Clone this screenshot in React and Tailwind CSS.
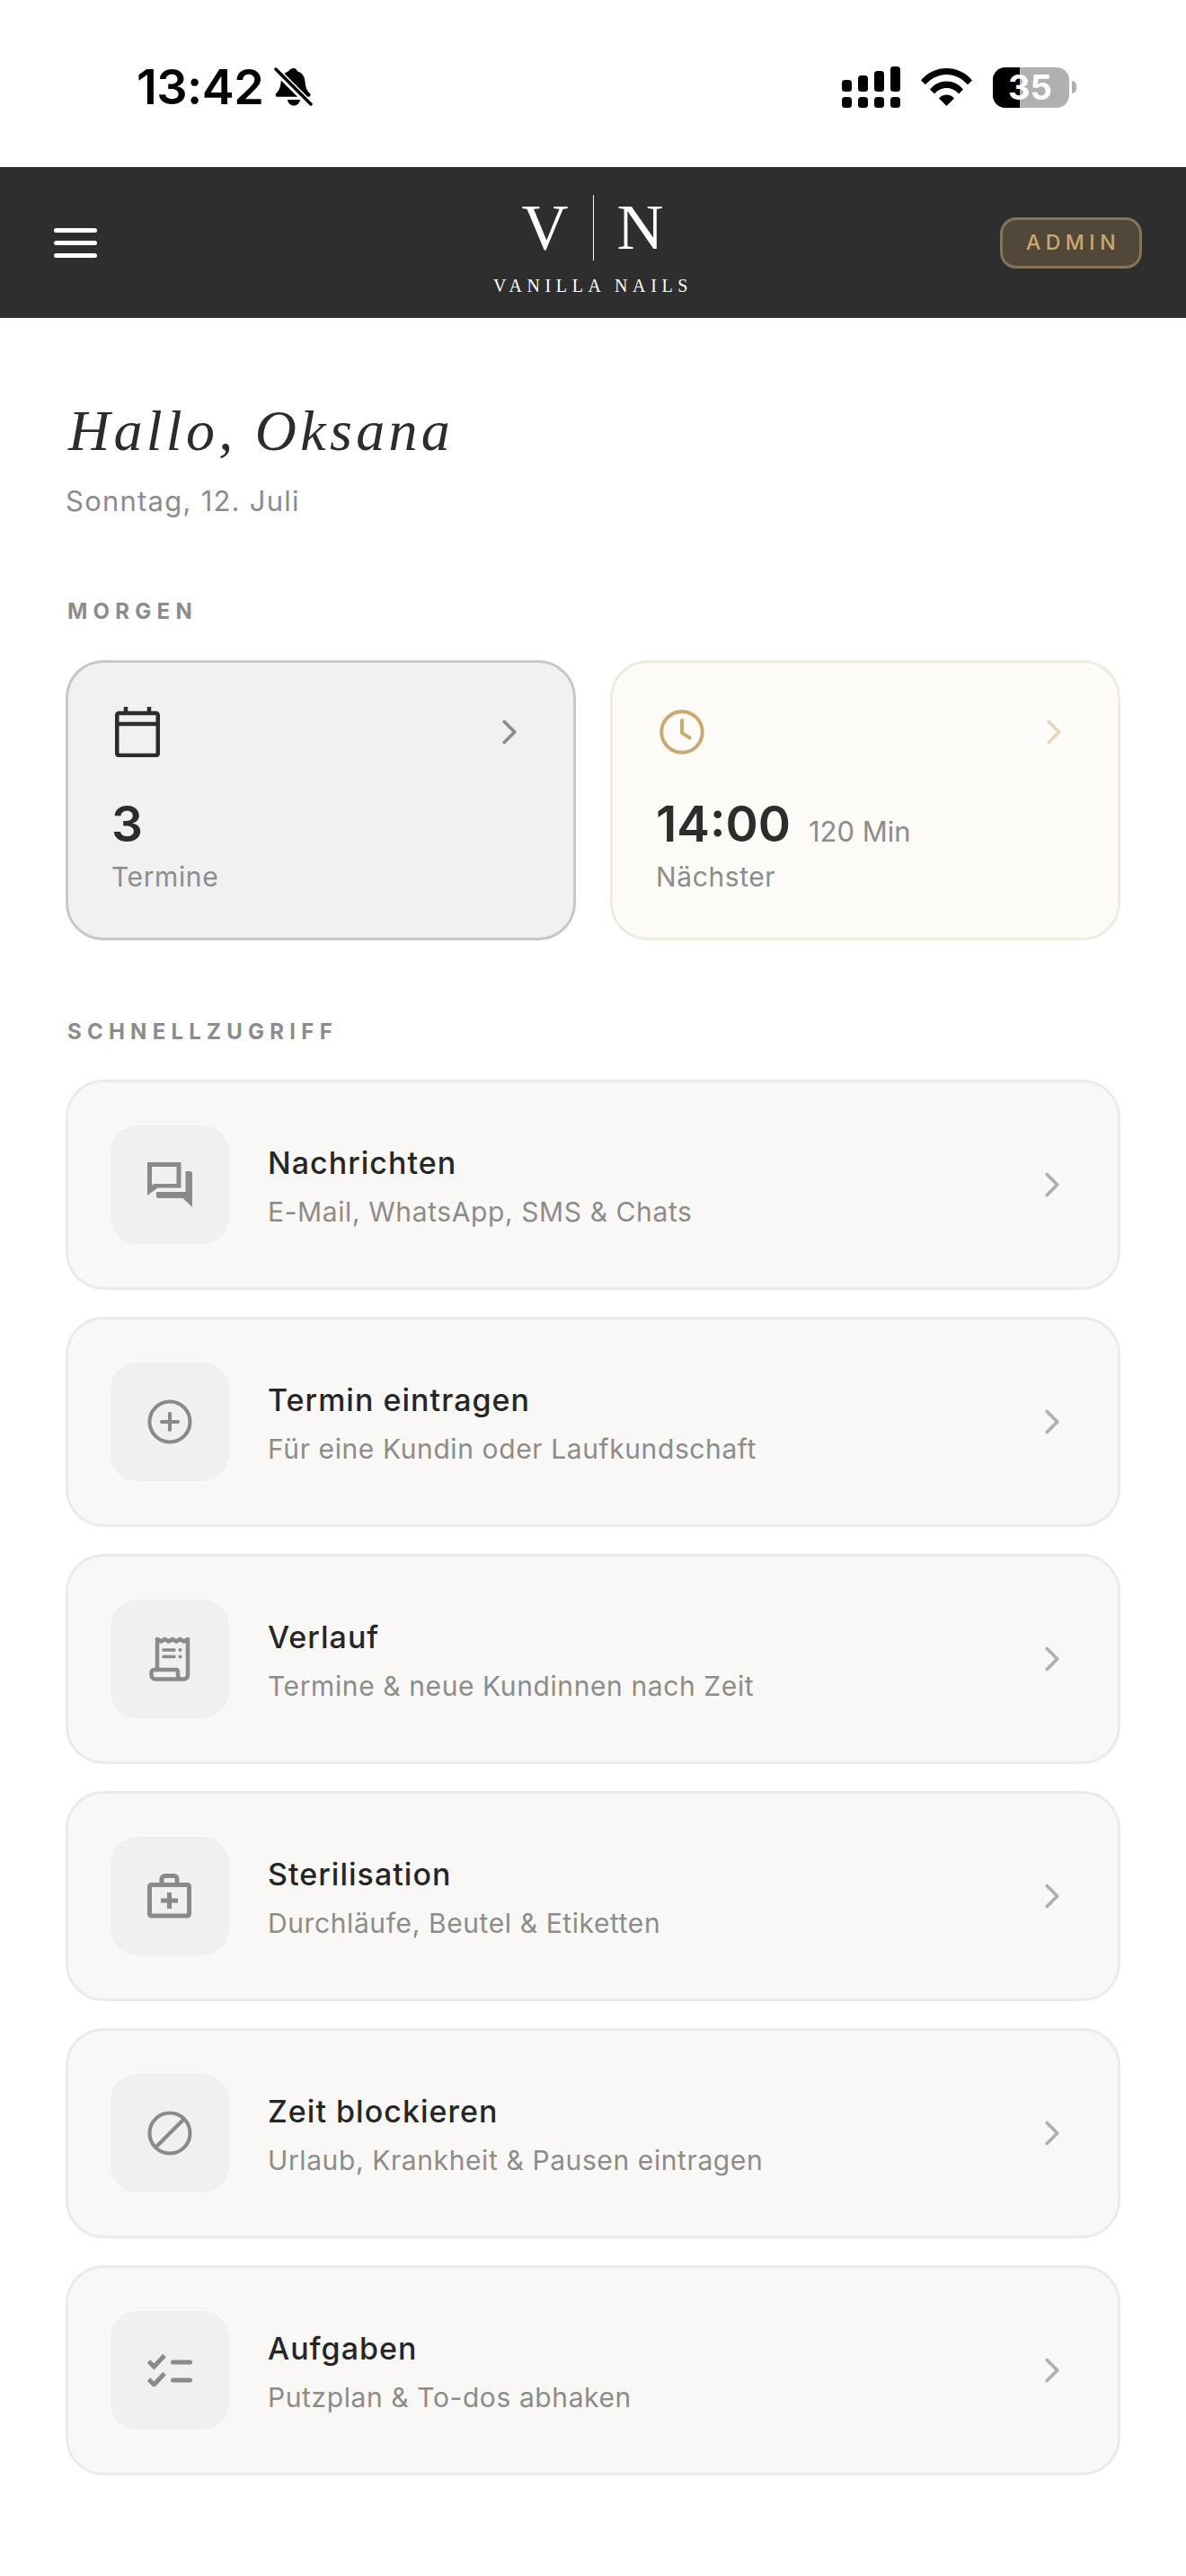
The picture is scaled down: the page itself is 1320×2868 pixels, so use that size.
import { ChevronRight } from 'lucide-react';

function Bell() {
  return (
    <svg width="44" height="46" viewBox="0 0 44 46" className="ml-[12px]">
      <path d="M22 2c2.200 0 3.500 1.500 3.800 3.300 5.500 1.500 8.200 6 8.700 11.500.5 5.500 1.500 9.500 5.200 13 1.500 1.500 1 4-1.500 4H4c-2.500 0-3-2.500-1.500-4 3.700-3.500 4.700-7.500 5.200-13 .5-5.500 3.200-10 8.700-11.500C16.700 3.500 19.800 2 22 2z" fill="#000" />
      <path d="M15 37h14c-.5 4-3.500 6.500-7 6.500S15.500 41 15 37z" fill="#000" />
      <path d="M1 3l38 38" stroke="#fff" strokeWidth="8" />
      <path d="M2 3l39 39" stroke="#000" strokeWidth="3.500" strokeLinecap="round" />
    </svg>
  );
}

function Signal() {
  return (
    <svg width="65" height="46" viewBox="0 0 65 46">
      <rect x="0" y="34" width="11" height="12" rx="3.500" />
      <rect x="18" y="34" width="11" height="12" rx="3.500" />
      <rect x="36" y="34" width="11" height="12" rx="3.500" />
      <rect x="54" y="34" width="11" height="12" rx="3.500" />
      <rect x="0" y="15" width="11" height="13" rx="3.500" />
      <rect x="18" y="10" width="11" height="18" rx="3.500" />
      <rect x="36" y="5" width="11" height="23" rx="3.500" />
      <rect x="54" y="0" width="11" height="28" rx="3.500" />
    </svg>
  );
}

function Wifi() {
  return (
    <svg width="57" height="42" viewBox="0 0 57 42">
      <path d="M0 13.500C7.500 4.500 17.500 0 28.500 0S49.500 4.500 57 13.500l-5 4.800C45.500 11 37.500 7 28.500 7S11.500 11 5 18.300z" />
      <path d="M10 23.500C15 17.500 21.500 14.500 28.500 14.500S42 17.500 47 23.500l-5 5C38.500 24.500 34 22 28.500 22S18.500 24.500 15 28.500z" />
      <path d="M20 33.500c2.200-2.500 5.200-4 8.500-4s6.300 1.500 8.500 4L28.500 42z" />
    </svg>
  );
}

function Battery() {
  return (
    <div className="flex items-center gap-[3px]">
      <div className="relative flex h-[45px] w-[85px] overflow-hidden rounded-[14px] bg-[#b0b0b0]">
        <div className="h-full w-[30px] bg-black" />
        <span className="absolute left-[17px] top-0 text-[38px] leading-[45px] font-bold text-white">35</span>
      </div>
      <div className="h-[14px] w-[5px] rounded-r-full bg-[#b0b0b0]" />
    </div>
  );
}

function IconChat() {
  return (
    <svg width="50" height="50" viewBox="0 0 50 50" fill="#8a8a88">
      <path fillRule="evenodd" d="M0 0h37.500v28.500H11.500L0 37zM5 5v20.500l3-1.500h24.500V5z" />
      <path d="M42.500 10h5a2.500 2.500 0 0 1 2.500 2.500V50L39.500 40H12a2 2 0 0 1-2-2v-5h32.500z" />
    </svg>
  );
}

function IconPlus() {
  return (
    <svg width="54" height="54" viewBox="0 0 24 24" fill="none" stroke="#8a8a88" strokeWidth="1.800" strokeLinecap="round">
      <circle cx="12" cy="12" r="10" />
      <path d="M12 8v8M8 12h8" />
    </svg>
  );
}

function IconReceipt() {
  return (
    <svg width="46" height="50" viewBox="0 0 46 50" fill="none" stroke="#8a8a88">
      <path
        strokeWidth="4.500"
        strokeLinejoin="round"
        d="M9 36V3l4.250 2.500 4.250-2.500 4.250 2.500 4.250-2.500 4.250 2.500 4.250-2.500 4.250 2.500L43 3V43a4.500 4.500 0 0 1-4.500 4.500H7A4.500 4.500 0 0 1 2.500 43V40a3 3 0 0 1 3-3H30a2 2 0 0 1 2 2v4a4.500 4.500 0 0 0 4.500 4.500"
      />
      <path strokeWidth="3.500" strokeLinecap="round" d="M16 15h12M16 22.500h12" />
      <circle cx="34.500" cy="15" r="2" fill="#8a8a88" stroke="none" />
      <circle cx="34.500" cy="22.500" r="2" fill="#8a8a88" stroke="none" />
    </svg>
  );
}

function IconKit() {
  return (
    <svg width="50" height="50" viewBox="0 0 50 50" fill="none" stroke="#8a8a88" strokeWidth="5" strokeLinejoin="round">
      <rect x="2.500" y="12.500" width="44" height="34.500" rx="2" />
      <path d="M16 12V6a3.500 3.500 0 0 1 3.500-3.500h10A3.500 3.500 0 0 1 33 6v6" />
      <path d="M24.500 21v18M15 30h19" />
    </svg>
  );
}

function IconBlock() {
  return (
    <svg width="54" height="54" viewBox="0 0 24 24" fill="none" stroke="#8a8a88" strokeWidth="1.800">
      <circle cx="12" cy="12" r="10" />
      <path d="M5 19L19 5" />
    </svg>
  );
}

function IconTasks() {
  return (
    <svg width="50" height="36" viewBox="0 0 50 36" fill="none" stroke="#8a8a88" strokeWidth="5">
      <path d="M1.500 8l6 6L19 1.500M1.500 28l6 6L19 21.500" />
      <path d="M28.500 9h19M28.500 29h19" strokeLinecap="round" />
    </svg>
  );
}

const links = [
  { title: 'Nachrichten', sub: 'E-Mail, WhatsApp, SMS & Chats', icon: <IconChat /> },
  { title: 'Termin eintragen', sub: 'Für eine Kundin oder Laufkundschaft', icon: <IconPlus /> },
  { title: 'Verlauf', sub: 'Termine & neue Kundinnen nach Zeit', icon: <IconReceipt /> },
  { title: 'Sterilisation', sub: 'Durchläufe, Beutel & Etiketten', icon: <IconKit /> },
  { title: 'Zeit blockieren', sub: 'Urlaub, Krankheit & Pausen eintragen', icon: <IconBlock /> },
  { title: 'Aufgaben', sub: 'Putzplan & To-dos abhaken', icon: <IconTasks /> },
];

function LinkRow({ title, sub, icon }) {
  return (
    <div className="flex h-[234px] items-center rounded-[42px] border-[3px] border-[#ecebe9] bg-[#f9f8f7] pl-[47px] pr-[50px]">
      <div className="flex h-[132px] w-[132px] shrink-0 items-center justify-center rounded-[30px] bg-[#f1f0ee]">{icon}</div>
      <div className="ml-[43px] flex-1 pt-[3px]">
        <div className="text-[34px] leading-[48px] font-[450] tracking-[0.03em] text-[#262626]">{title}</div>
        <div className="mt-[9px] text-[30px] leading-[42px] tracking-[0.02em] text-[#8c8c8a]">{sub}</div>
      </div>
      <ChevronRight size={46} strokeWidth={2} color="#b0b0ae" />
    </div>
  );
}

export default function App() {
  return (
    <div className="min-h-[2868px] bg-white" style={{ fontFamily: 'Inter, sans-serif' }}>
      <div className="flex h-[186px] items-center justify-between pt-[8px] pl-[152px] pr-[122px] text-black">
        <div className="flex items-center">
          <span className="text-[54px] leading-none font-semibold tracking-[-0.01em]">13:42</span>
          <Bell />
        </div>
        <div className="flex items-center gap-[23px]">
          <Signal />
          <Wifi />
          <Battery />
        </div>
      </div>

      <header className="grid h-[168px] grid-cols-[1fr_auto_1fr] items-center bg-[#2e2e2e] pl-[60px] pr-[49px]">
        <div className="flex w-[48px] flex-col gap-[9px]">
          <div className="h-[5px] rounded-full bg-white" />
          <div className="h-[5px] rounded-full bg-white" />
          <div className="h-[5px] rounded-full bg-white" />
        </div>
        <div className="-ml-[11px] flex flex-col items-center pt-[4px] text-white" style={{ fontFamily: '"Liberation Serif", serif' }}>
          <div className="flex h-[73px] items-center">
            <span className="w-[80px] pr-[27px] text-right text-[72px] leading-none">V</span>
            <div className="h-[73px] w-[1px] bg-white" />
            <span className="w-[80px] pl-[26px] text-[72px] leading-none">N</span>
          </div>
          <div className="mt-[18px] text-[20px] leading-none tracking-[0.28em] whitespace-nowrap">VANILLA NAILS</div>
        </div>
        <div className="flex h-[57px] w-[158px] items-center justify-center justify-self-end rounded-[18px] border-[3px] border-[#85755a] bg-[#51483a] pl-[5px] text-[23px] font-medium tracking-[0.24em] text-[#c9a96e]">ADMIN</div>
      </header>

      <main className="px-[73px]">
        <h1 className="mt-[90px] ml-[3px] text-[64px] leading-[72px] tracking-[0.067em] text-[#2c2c2c] italic" style={{ fontFamily: '"Liberation Serif", serif' }}>Hallo, Oksana</h1>
        <p className="mt-[21px] text-[31px] leading-[42px] tracking-[0.04em] text-[#8c8c8c]">Sonntag, 12. Juli</p>

        <h2 className="mt-[87px] ml-[2px] text-[24px] leading-[30px] font-bold tracking-[0.26em] text-[#8c8c8c]">MORGEN</h2>
        <div className="mt-[39px] grid grid-cols-2 gap-[38px]">
          <div className="h-[312px] rounded-[42px] border-[3px] border-[#c8c8c8] bg-[#f1f1f1] px-[48px] pt-[48px]">
            <div className="flex h-[58px] items-center justify-between pl-[4px]">
              <svg width="50" height="56" viewBox="0 0 50 56" fill="none" stroke="#2c2c2c" strokeWidth="4.500" strokeLinejoin="round">
                <rect x="2.250" y="7" width="45.500" height="47" rx="2" />
                <path d="M2 19h46" />
                <path d="M12 0v8M38 0v8" />
              </svg>
              <ChevronRight size={46} strokeWidth={2} color="#8c8c8c" />
            </div>
            <div className="mt-[41px] text-[55px] leading-[64px] font-semibold text-[#2c2c2c]">3</div>
            <div className="mt-[6px] text-[30px] leading-[42px] tracking-[0.02em] text-[#8c8c8c]">Termine</div>
          </div>
          <div className="h-[312px] rounded-[42px] border-[3px] border-[#f0ebdf] bg-[#fcfbf7] px-[48px] pt-[48px]">
            <div className="flex h-[58px] items-center justify-between pl-[3px]">
              <svg width="52" height="52" viewBox="0 0 24 24" fill="none" stroke="#c9a96e" strokeWidth="1.800" strokeLinecap="round" strokeLinejoin="round">
                <circle cx="12" cy="12" r="10.500" />
                <path d="M12 6v6.500l4 2.500" />
              </svg>
              <ChevronRight size={46} strokeWidth={2} color="#e6d6ba" />
            </div>
            <div className="mt-[41px] flex items-baseline gap-[20px]">
              <span className="text-[55px] leading-[64px] font-semibold text-[#2c2c2c]">14:00</span>
              <span className="text-[31px] leading-[42px] text-[#8c8c8c]">120 Min</span>
            </div>
            <div className="mt-[6px] text-[30px] leading-[42px] tracking-[0.02em] text-[#8c8c8c]">Nächster</div>
          </div>
        </div>

        <h2 className="mt-[87px] ml-[2px] text-[24px] leading-[30px] font-bold tracking-[0.26em] text-[#8c8c8c]">SCHNELLZUGRIFF</h2>
        <div className="mt-[38px] flex flex-col gap-[30px]">
          {links.map((l) => (
            <LinkRow key={l.title} title={l.title} sub={l.sub} icon={l.icon} />
          ))}
        </div>
      </main>
    </div>
  );
}
